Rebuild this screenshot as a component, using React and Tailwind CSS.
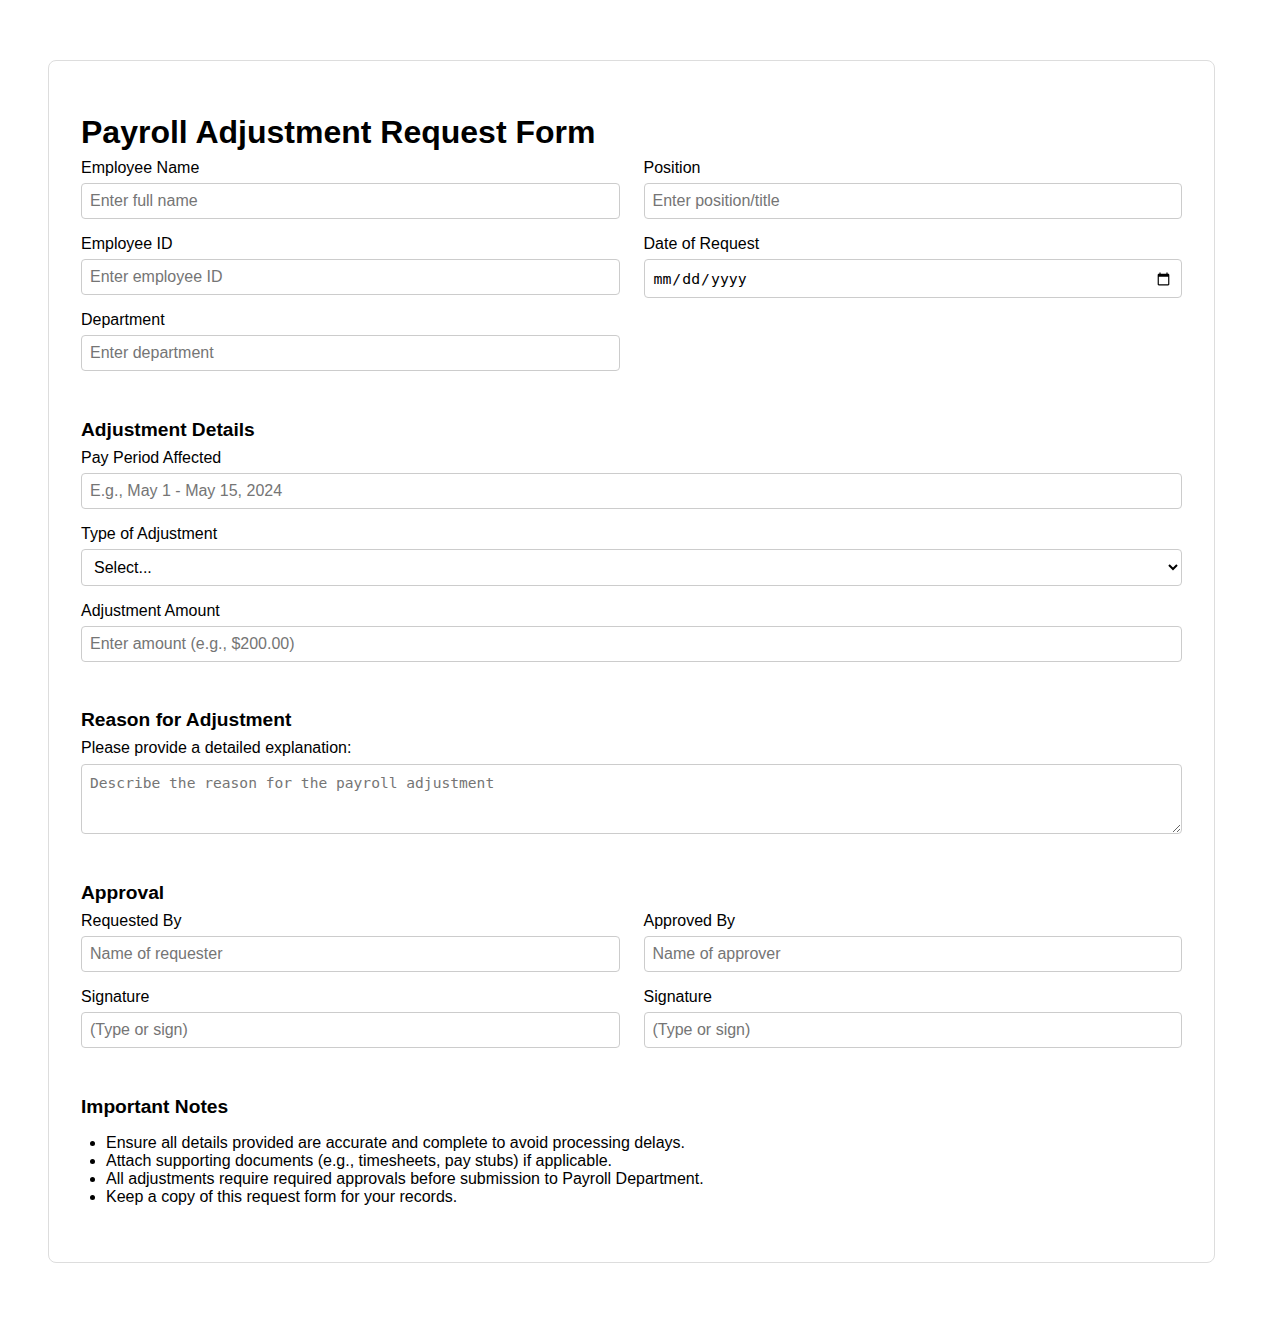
import React from "react";

const inputCls =
  "block w-full h-[36px] px-[8px] border border-[#cccccc] rounded-[4px] bg-white text-[16px] text-black placeholder:text-[#757575] outline-none";

function Field({ label, placeholder, last }) {
  return (
    <div className={last ? "" : "mb-[16px]"}>
      <label className="block mb-[6px] h-[18px] leading-[18px]">{label}</label>
      <input type="text" placeholder={placeholder} className={inputCls} />
    </div>
  );
}

function Heading({ children }) {
  return (
    <h2 className="text-[19.2px] font-bold leading-[22px] mb-[8px]">{children}</h2>
  );
}

export default function App() {
  return (
    <div className="min-h-[1323px] bg-white pt-[60px] px-[48px] font-['Liberation_Sans',Arial,sans-serif] text-[16px] leading-[normal] text-black">
      <div className="w-[1167px] border border-[#dddddd] rounded-[8px] px-[32px] pt-[32px] pb-[32px]">
        <h1 className="text-[32px] font-bold leading-[36px] mt-[21px] mb-[9px]">
          Payroll Adjustment Request Form
        </h1>

        <div className="grid grid-cols-2 gap-x-[24px] items-start">
          <div>
            <Field label="Employee Name" placeholder="Enter full name" />
            <Field label="Employee ID" placeholder="Enter employee ID" />
            <Field label="Department" placeholder="Enter department" last />
          </div>
          <div>
            <Field label="Position" placeholder="Enter position/title" />
            <div>
              <label className="block mb-[6px] h-[18px] leading-[18px]">Date of Request</label>
              <input
                type="date"
                className="block w-full h-[39px] pl-[8px] pr-[8px] pt-[1px] border border-[#cccccc] rounded-[4px] bg-white text-black font-['DejaVu_Sans_Mono',monospace] text-[14.8px] outline-none"
              />
            </div>
          </div>
        </div>

        <div className="mt-[48px]">
          <Heading>Adjustment Details</Heading>
          <Field label="Pay Period Affected" placeholder="E.g., May 1 - May 15, 2024" />
          <div className="mb-[16px]">
            <label className="block mb-[6px] h-[18px] leading-[18px]">Type of Adjustment</label>
            <select className="block w-full h-[37px] px-[8px] border border-[#cccccc] rounded-[4px] bg-white text-[16px] text-black outline-none">
              <option>Select...</option>
              <option>Salary Increase</option>
              <option>Salary Decrease</option>
              <option>Bonus</option>
              <option>Deduction</option>
              <option>Other</option>
            </select>
          </div>
          <Field label="Adjustment Amount" placeholder="Enter amount (e.g., $200.00)" last />
        </div>

        <div className="mt-[47px]">
          <Heading>Reason for Adjustment</Heading>
          <label className="block mb-[7px] h-[18px] leading-[18px]">Please provide a detailed explanation:</label>
          <textarea
            placeholder="Describe the reason for the payroll adjustment"
            className="block w-full h-[70px] px-[8px] pt-[9px] pb-[7px] border border-[#cccccc] rounded-[4px] bg-white text-black font-['DejaVu_Sans_Mono',monospace] text-[14.6px] leading-[17px] placeholder:text-[#757575] outline-none"
          />
        </div>

        <div className="mt-[48px]">
          <Heading>Approval</Heading>
          <div className="grid grid-cols-2 gap-x-[24px]">
            <div>
              <Field label="Requested By" placeholder="Name of requester" />
              <Field label="Signature" placeholder="(Type or sign)" last />
            </div>
            <div>
              <Field label="Approved By" placeholder="Name of approver" />
              <Field label="Signature" placeholder="(Type or sign)" last />
            </div>
          </div>
        </div>

        <div className="mt-[48px]">
          <Heading>Important Notes</Heading>
          <ul className="list-disc pl-[25px] mt-[16px] mb-[24px]">
            <li>Ensure all details provided are accurate and complete to avoid processing delays.</li>
            <li>Attach supporting documents (e.g., timesheets, pay stubs) if applicable.</li>
            <li>All adjustments require required approvals before submission to Payroll Department.</li>
            <li>Keep a copy of this request form for your records.</li>
          </ul>
        </div>
      </div>
    </div>
  );
}
